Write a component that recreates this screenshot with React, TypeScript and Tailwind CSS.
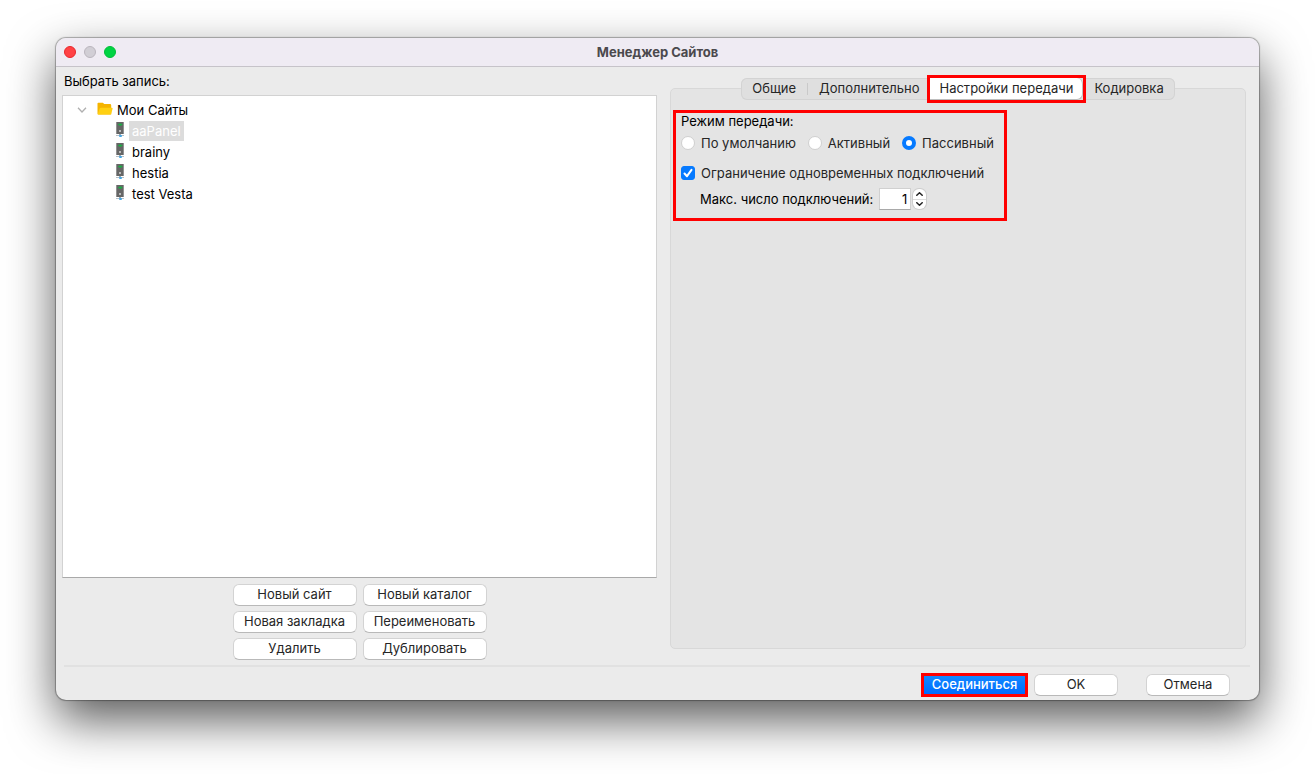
import React, { useState } from 'react';

type Mode = 'default' | 'active' | 'passive';

const sites = ['aaPanel', 'brainy', 'hestia', 'test Vesta'];

const siteActions = [
  'Новый сайт',
  'Новый каталог',
  'Новая закладка',
  'Переименовать',
  'Удалить',
  'Дублировать',
];

const tabs = ['Общие', 'Дополнительно', 'Настройки передачи', 'Кодировка'];

const modes: { id: Mode; label: string }[] = [
  { id: 'default', label: 'По умолчанию' },
  { id: 'active', label: 'Активный' },
  { id: 'passive', label: 'Пассивный' },
];

function FolderIcon() {
  return (
    <svg width="16" height="14" viewBox="0 0 16 14" aria-hidden="true">
      <path d="M0.5 1.5Q0.5 0.8 1.2 0.8H5.8L7.3 2H13Q14.2 2 14.2 3.2V12.5H1.5Q0.5 12.5 0.5 11.5Z" fill="#f5b400" />
      <path d="M2.6 6.6Q2.9 5.8 3.8 5.8H14.8Q15.9 5.8 15.6 6.8L14.2 11.8Q14 12.6 13.2 12.6H1.2Q0.7 12.6 0.8 12Z" fill="#ffd012" />
    </svg>
  );
}

function ServerIcon() {
  return (
    <svg width="10" height="17" viewBox="0 0 10 17" aria-hidden="true">
      <rect x="1" y="1" width="8" height="12" fill="#929292" />
      <rect x="2" y="1" width="6" height="12" fill="#666666" />
      <path d="M2.5 3.8L5 2.2L8 3.2L5.6 5Z" fill="#1faa46" />
      <rect x="4" y="9" width="2" height="2" fill="#b9b9b9" />
      <rect x="1" y="14" width="8" height="1" fill="#b5bec5" />
      <rect x="4" y="13" width="2" height="1" fill="#9aa9b4" />
      <rect x="4" y="14" width="3" height="2" rx="1" fill="#45a5e2" />
    </svg>
  );
}

function PushButton({ children, className }: { children: React.ReactNode; className: string }) {
  return (
    <button
      type="button"
      className={`h-[22px] rounded-md border border-[#d3d3d3] border-b-[#b9b9b9] bg-white pb-0.5 leading-[18px] text-[#262626] ${className}`}
    >
      {children}
    </button>
  );
}

export default function App() {
  const [selected, setSelected] = useState('aaPanel');
  const [tab, setTab] = useState(2);
  const [mode, setMode] = useState<Mode>('passive');
  const [limited, setLimited] = useState(true);
  const [max, setMax] = useState(1);

  return (
    <div className="flex min-h-screen flex-col bg-white px-14 pt-[38px] pb-[74px] font-['Inter','Noto_Sans',sans-serif] text-[13px] leading-[18px] text-black">
      <main className="flex flex-1 flex-col overflow-hidden rounded-[10px] bg-[#ebebeb] shadow-[0_0_1px_1px_rgba(0,0,0,0.3),0_20px_48px_rgba(0,0,0,0.65)]">
        {/* Title bar */}
        <header className="grid h-[29px] shrink-0 grid-cols-[1fr_auto_1fr] items-center border-b border-[#c6c3c9] bg-[#efebf3] px-2">
          <div className="flex gap-2">
            <button type="button" aria-label="Закрыть" className="size-3 rounded-full border border-[#e8272c] bg-[#ff4245]" />
            <button type="button" aria-label="Свернуть" className="size-3 rounded-full border border-[#b9b5bd] bg-[#d1ced5]" />
            <button type="button" aria-label="Развернуть" className="size-3 rounded-full border border-[#00bd38] bg-[#00d443]" />
          </div>
          <h1 className="font-bold text-[#4b494d]">Менеджер Сайтов</h1>
        </header>

        <div className="grid flex-1 grid-cols-[595fr_576fr] gap-[13px] pr-[13px] pl-1.5">
          {/* Site list */}
          <section className="flex flex-col pt-[5px] pb-[5px]">
            <h2 className="mb-[5px] px-0.5">Выбрать запись:</h2>
            <div className="flex-1 border border-[#d2d2d2] border-b-[#a9a9a9] bg-white pt-[3px]" role="tree" aria-label="Выбрать запись">
              <div className="flex h-[21px] items-center pl-3.5" role="treeitem" aria-expanded="true">
                <svg width="10" height="6" viewBox="0 0 10 6" fill="none" stroke="#b0b0b0" strokeWidth="1.3" aria-hidden="true">
                  <path d="M1 0.8L5 5L9 0.8" />
                </svg>
                <span className="mr-1 ml-2.5 pb-0.5">
                  <FolderIcon />
                </span>
                Мои Сайты
              </div>
              {sites.map(site => (
                <div key={site} className="flex h-[21px] items-center gap-1 pl-[52px]" role="treeitem" aria-selected={selected === site}>
                  <span className="pb-0.5">
                    <ServerIcon />
                  </span>
                  <button
                    type="button"
                    onClick={() => setSelected(site)}
                    className={`h-5 px-[3px] ${selected === site ? 'bg-[#dcdcdc] text-white' : ''}`}
                  >
                    {site}
                  </button>
                </div>
              ))}
            </div>
            <div className="mt-1.5 grid grid-cols-[124px_124px] justify-center gap-x-1.5 gap-y-[5px]">
              {siteActions.map(action => (
                <PushButton key={action} className="w-full">{action}</PushButton>
              ))}
            </div>
          </section>

          {/* Settings */}
          <section className="flex flex-col pt-[21px] pb-4">
            <div className="flex-1 rounded-[5px] border border-[#d8d8d8] bg-[#e4e4e4]">
              <div className="mx-auto -mt-[11px] flex h-[22px] w-fit items-center rounded-md bg-[#dfdfdf] ring-1 ring-[#d3d3d3] ring-inset" role="tablist">
                {tabs.map((name, i) => (
                  <React.Fragment key={name}>
                    {i > 0 && tab !== i && tab !== i - 1 && <span className="h-3 w-px bg-[#c9c9c9]" />}
                    <span className={tab === i ? 'bg-[#dfdfdf] outline-3 outline-[#ff0000]' : ''}>
                      <button
                        type="button"
                        role="tab"
                        aria-selected={tab === i}
                        onClick={() => setTab(i)}
                        className={`block h-[22px] pb-0.5 text-[#262626] ${
                          tab === i ? 'rounded-r-md border-r border-b border-[#bdbdbd] bg-white px-[9px]' : 'px-[11px]'
                        }`}
                      >
                        {name}
                      </button>
                    </span>
                  </React.Fragment>
                ))}
              </div>

              <div className="mt-2.5 ml-0.5 w-fit border-3 border-[#ff0000] pr-2.5 pb-2 pl-[5px]">
                <fieldset>
                  <legend className="leading-4">Режим передачи:</legend>
                  <div className="mt-[5px] flex gap-3">
                    {modes.map(m => (
                      <label key={m.id} className="flex items-center gap-1.5 text-[#262626]">
                        <input
                          type="radio"
                          name="mode"
                          checked={mode === m.id}
                          onChange={() => setMode(m.id)}
                          className="size-3.5 appearance-none rounded-full border border-[#cfcfcf] bg-white checked:border-4 checked:border-[#067aff]"
                        />
                        {m.label}
                      </label>
                    ))}
                  </div>
                </fieldset>
                <label className="mt-3 flex items-center gap-1.5 text-[#262626]">
                  <span className="grid size-3.5">
                    <input
                      type="checkbox"
                      checked={limited}
                      onChange={e => setLimited(e.target.checked)}
                      className="col-start-1 row-start-1 size-3.5 appearance-none rounded-[3px] border border-[#c4c4c4] bg-white checked:border-[#067aff] checked:bg-[#067aff]"
                    />
                    {limited && (
                      <svg viewBox="0 0 14 14" className="pointer-events-none col-start-1 row-start-1 size-3.5" fill="none" stroke="#fff" strokeWidth="2" strokeLinecap="round" strokeLinejoin="round" aria-hidden="true">
                        <path d="M3.5 7.5L6 10.2L10.5 3.8" />
                      </svg>
                    )}
                  </span>
                  Ограничение одновременных подключений
                </label>
                <div className="mt-1.5 flex items-center pl-[19px]">
                  <label htmlFor="max">Макс. число подключений:</label>
                  <input
                    id="max"
                    type="text"
                    inputMode="numeric"
                    value={max}
                    onChange={e => setMax(Number(e.target.value) || 1)}
                    className="ml-1.5 h-[22px] w-8 border border-[#d0d0d0] border-b-[#a9a9a9] bg-white px-[3px] text-right"
                  />
                  <div className="ml-0.5 flex h-5 w-[13px] flex-col overflow-hidden rounded-md bg-white ring-1 ring-[#cdcdcd]">
                    <button type="button" aria-label="Больше" onClick={() => setMax(max + 1)} className="flex flex-1 items-center justify-center border-b border-[#dddddd]">
                      <svg width="7" height="4" viewBox="0 0 7 4" fill="none" stroke="#222" strokeWidth="1.5" strokeLinecap="round">
                        <path d="M0.8 3.3L3.5 0.8L6.2 3.3" />
                      </svg>
                    </button>
                    <button type="button" aria-label="Меньше" onClick={() => setMax(Math.max(1, max - 1))} className="flex flex-1 items-center justify-center">
                      <svg width="7" height="4" viewBox="0 0 7 4" fill="none" stroke="#222" strokeWidth="1.5" strokeLinecap="round">
                        <path d="M0.8 0.7L3.5 3.2L6.2 0.7" />
                      </svg>
                    </button>
                  </div>
                </div>
              </div>
            </div>
          </section>
        </div>

        <footer className="mr-[9px] ml-2 flex items-center justify-end border-t-2 border-[#e1e1e1] pt-1.5 pr-5 pb-[3px]">
          <button type="button" className="h-6 w-[107px] border-3 border-[#ff0000] bg-linear-to-b from-[#1487ff] to-[#006bff] pb-0.5 leading-4 font-medium text-white">
            Соединиться
          </button>
          <PushButton className="ml-1.5 w-[84px]">OK</PushButton>
          <PushButton className="ml-7 w-[84px]">Отмена</PushButton>
        </footer>
      </main>
    </div>
  );
}
